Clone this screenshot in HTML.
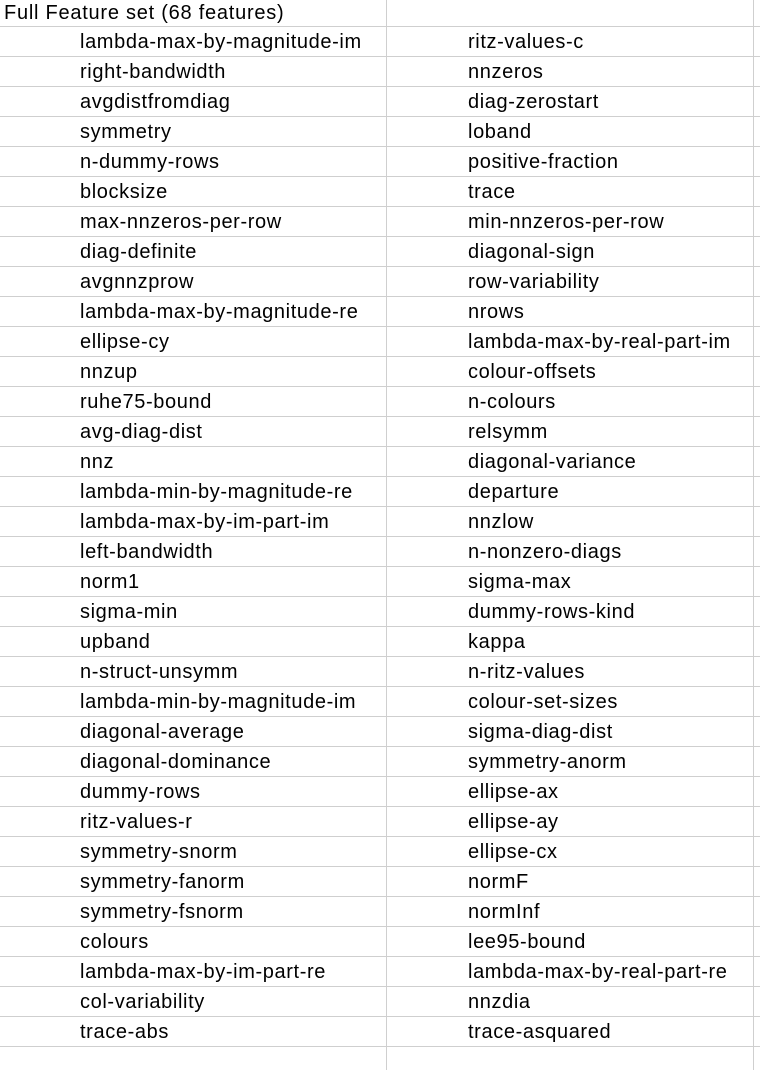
<!DOCTYPE html>
<html><head><meta charset="utf-8"><style>
body{margin:0;width:760px;height:1070px;overflow:hidden;background:#fff;position:relative;font-family:"Liberation Sans",sans-serif;font-size:20px;letter-spacing:0.62px;color:#000}
.h{position:absolute;left:0;width:760px;height:1px;background:#cfcfcf}
.v{position:absolute;top:0;width:1px;height:1070px;background:#cfcfcf}
.t{position:absolute;line-height:30px;white-space:nowrap}
</style></head><body>
<div class="v" style="left:386px"></div><div class="v" style="left:753px"></div>
<div class="t" style="left:4px;top:-2px;letter-spacing:0.75px">Full Feature set (68 features)</div>
<div id="g"></div>
<script>
var L=["lambda-max-by-magnitude-im","right-bandwidth","avgdistfromdiag","symmetry","n-dummy-rows","blocksize","max-nnzeros-per-row","diag-definite","avgnnzprow","lambda-max-by-magnitude-re","ellipse-cy","nnzup","ruhe75-bound","avg-diag-dist","nnz","lambda-min-by-magnitude-re","lambda-max-by-im-part-im","left-bandwidth","norm1","sigma-min","upband","n-struct-unsymm","lambda-min-by-magnitude-im","diagonal-average","diagonal-dominance","dummy-rows","ritz-values-r","symmetry-snorm","symmetry-fanorm","symmetry-fsnorm","colours","lambda-max-by-im-part-re","col-variability","trace-abs"];
var R=["ritz-values-c","nnzeros","diag-zerostart","loband","positive-fraction","trace","min-nnzeros-per-row","diagonal-sign","row-variability","nrows","lambda-max-by-real-part-im","colour-offsets","n-colours","relsymm","diagonal-variance","departure","nnzlow","n-nonzero-diags","sigma-max","dummy-rows-kind","kappa","n-ritz-values","colour-set-sizes","sigma-diag-dist","symmetry-anorm","ellipse-ax","ellipse-ay","ellipse-cx","normF","normInf","lee95-bound","lambda-max-by-real-part-re","nnzdia","trace-asquared"];
var h='';
for(var k=0;k<=34;k++)h+='<div class="h" style="top:'+(26+30*k)+'px"></div>';
for(var i=0;i<34;i++){var y=27+30*i;h+='<div class="t" style="left:80px;top:'+y+'px">'+L[i]+'</div><div class="t" style="left:468px;top:'+y+'px">'+R[i]+'</div>';}
document.getElementById('g').innerHTML=h;
</script>
</body></html>
